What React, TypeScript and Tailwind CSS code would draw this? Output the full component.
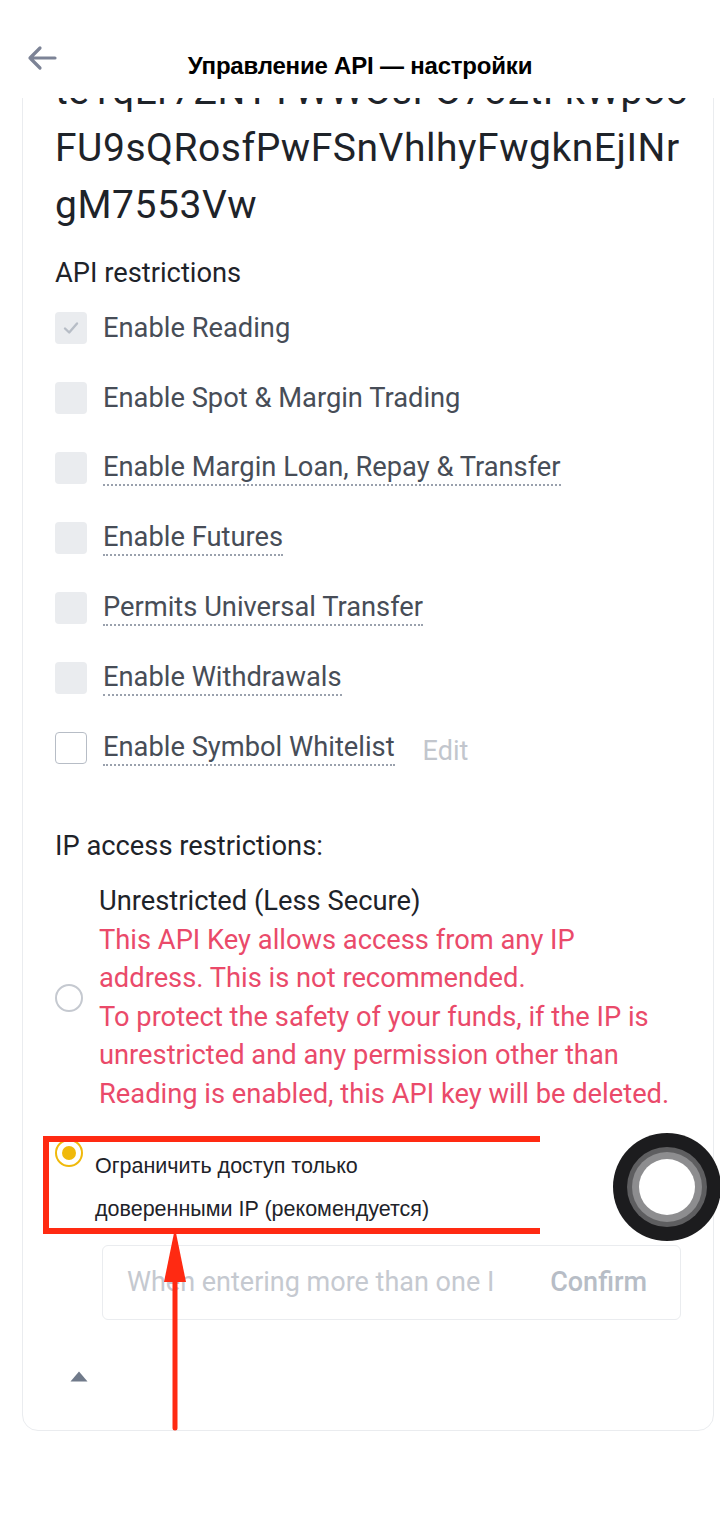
import React from "react";

const plex = { fontFamily: "Roboto, 'Noto Sans', sans-serif" };
const arial = { fontFamily: "'Liberation Sans', Arial, sans-serif" };

function Check({ checked, outline }: { checked?: boolean; outline?: boolean }) {
  if (outline) {
    return <div className="w-[32px] h-[32px] shrink-0 rounded-[4px] border-[1.5px] border-[#b7bdc6] bg-white" />;
  }
  return (
    <div className="w-[32px] h-[32px] shrink-0 rounded-[4px] bg-[#eaecef] flex items-center justify-center">
      {checked && (
        <svg width="20" height="20" viewBox="0 0 20 20" fill="none">
          <path d="M4 10.5 L8.2 14.5 L16 5.5" stroke="#b7bdc6" strokeWidth="2.4" strokeLinecap="round" strokeLinejoin="round" />
        </svg>
      )}
    </div>
  );
}

function Row({ label, dotted, checked, outline, extra }: { label: string; dotted?: boolean; checked?: boolean; outline?: boolean; extra?: React.ReactNode }) {
  return (
    <div className="flex items-center h-[40px]">
      <Check checked={checked} outline={outline} />
      <span
        className={
          "ml-[16px] text-[27.3px] leading-[34px] text-[#474d57] whitespace-nowrap " +
          (dotted ? "border-b-2 border-dotted border-[#9aa1ad]" : "")
        }
      >
        {label}
      </span>
      {extra}
    </div>
  );
}

export default function App() {
  return (
    <div className="w-[720px] h-[1518px] bg-white relative overflow-hidden" style={plex}>
      {/* header */}
      <div className="relative z-10 h-[98px] bg-white flex items-start justify-center">
        <svg className="absolute left-[26px] top-[44px]" width="32" height="28" viewBox="0 0 32 28" fill="none">
          <path d="M29 14 H4 M14 4 L4 14 L14 24" stroke="#7c8396" strokeWidth="3.2" strokeLinecap="round" strokeLinejoin="round" />
        </svg>
        <div className="mt-[51px] text-[24px] leading-[30px] font-bold text-black tracking-[-0.2px]" style={arial}>
          Управление API — настройки
        </div>
      </div>

      {/* card */}
      <div className="ml-[22px] mr-[6px] -mt-[68px] border border-[#eaecef] rounded-[16px] px-[32px] pt-[32px] pb-[48px]">
        <div className="text-[39px] leading-[57px] text-[#1e2329] whitespace-nowrap tracking-[0.55px]">
          <div>te1qEr7ZNYYWWOsFO7o2tFkWpoo</div>
          <div>FU9sQRosfPwFSnVhlhyFwgknEjINr</div>
          <div>gM7553Vw</div>
        </div>

        <div className="mt-[21px] text-[27.3px] leading-[36px] text-[#1e2329]">API restrictions</div>

        <div className="mt-[17px] flex flex-col gap-[30px]">
          <Row label="Enable Reading" checked />
          <Row label="Enable Spot & Margin Trading" />
          <Row label="Enable Margin Loan, Repay & Transfer" dotted />
          <Row label="Enable Futures" dotted />
          <Row label="Permits Universal Transfer" dotted />
          <Row label="Enable Withdrawals" dotted />
          <Row
            label="Enable Symbol Whitelist"
            dotted
            outline
            extra={<span className="ml-[28px] mt-[6px] text-[27px] text-[#c2c6cd]">Edit</span>}
          />
        </div>

        <div className="mt-[60px] text-[27.3px] leading-[36px] text-[#1e2329]">IP access restrictions:</div>

        <div className="mt-[18px] flex items-center">
          <div className="w-[28px] h-[28px] shrink-0 rounded-full border-[2px] border-[#c5c9d0] bg-white" />
          <div className="ml-[16px] text-[27.3px] leading-[38.6px] whitespace-nowrap">
            <div className="text-[#1e2329]">Unrestricted (Less Secure)</div>
            <div className="text-[#ea4a6a]">
              <div>This API Key allows access from any IP</div>
              <div>address. This is not recommended.</div>
              <div>To protect the safety of your funds, if the IP is</div>
              <div>unrestricted and any permission other than</div>
              <div>Reading is enabled, this API key will be deleted.</div>
            </div>
          </div>
        </div>

        <div className="relative mt-[28px] flex items-start">
          <div className="-mt-[3px] w-[28px] h-[28px] shrink-0 rounded-full border-[2px] border-[#f0b90b] bg-white flex items-center justify-center">
            <div className="w-[14px] h-[14px] rounded-full bg-[#f0b90b]" />
          </div>
          <div className="ml-[12px] mt-[3px] text-[21.5px] leading-[43px] text-[#1e2329] whitespace-nowrap" style={arial}>
            <div>Ограничить доступ только</div>
            <div>доверенными IP (рекомендуется)</div>
          </div>
          <div className="absolute left-[-12px] top-[-6px] w-[497px] h-[98px] border-[6px] border-r-0 border-[#ff2a12]" />
        </div>

        <div className="ml-[47px] mt-[14px] h-[75px] border border-[#eaecef] rounded-[6px] flex items-center pl-[24px] pr-[33px]">
          <div className="w-[366px] overflow-hidden whitespace-nowrap text-[27px] text-[#c5c9d0]">
            When entering more than one IP address
          </div>
          <div className="ml-auto text-[27px] font-medium text-[#b7bdc6]">Confirm</div>
        </div>

        <div className="mt-[51px] ml-[15px]">
          <svg width="18" height="11" viewBox="0 0 18 11">
            <path d="M9 0.5 L17.5 10.5 H0.5 Z" fill="#707a8a" />
          </svg>
        </div>
      </div>

      {/* black circle overlay */}
      <div className="absolute left-[613px] top-[1133px] w-[108px] h-[108px] rounded-full bg-[#1c1c1e] flex items-center justify-center">
        <div className="w-[80px] h-[80px] rounded-full bg-[#5e5e60] flex items-center justify-center">
          <div className="w-[70px] h-[70px] rounded-full bg-[#8d8d8f] flex items-center justify-center">
            <div className="w-[56px] h-[56px] rounded-full bg-white" />
          </div>
        </div>
      </div>

      {/* red arrow overlay */}
      <svg className="absolute left-[162px] top-[1226px]" width="26" height="206" viewBox="0 0 26 206">
        <path d="M13 40 V202" stroke="#ff2a12" strokeWidth="5" strokeLinecap="round" />
        <path d="M13 2 L24 56 H2 Z" fill="#ff2a12" />
      </svg>
    </div>
  );
}
